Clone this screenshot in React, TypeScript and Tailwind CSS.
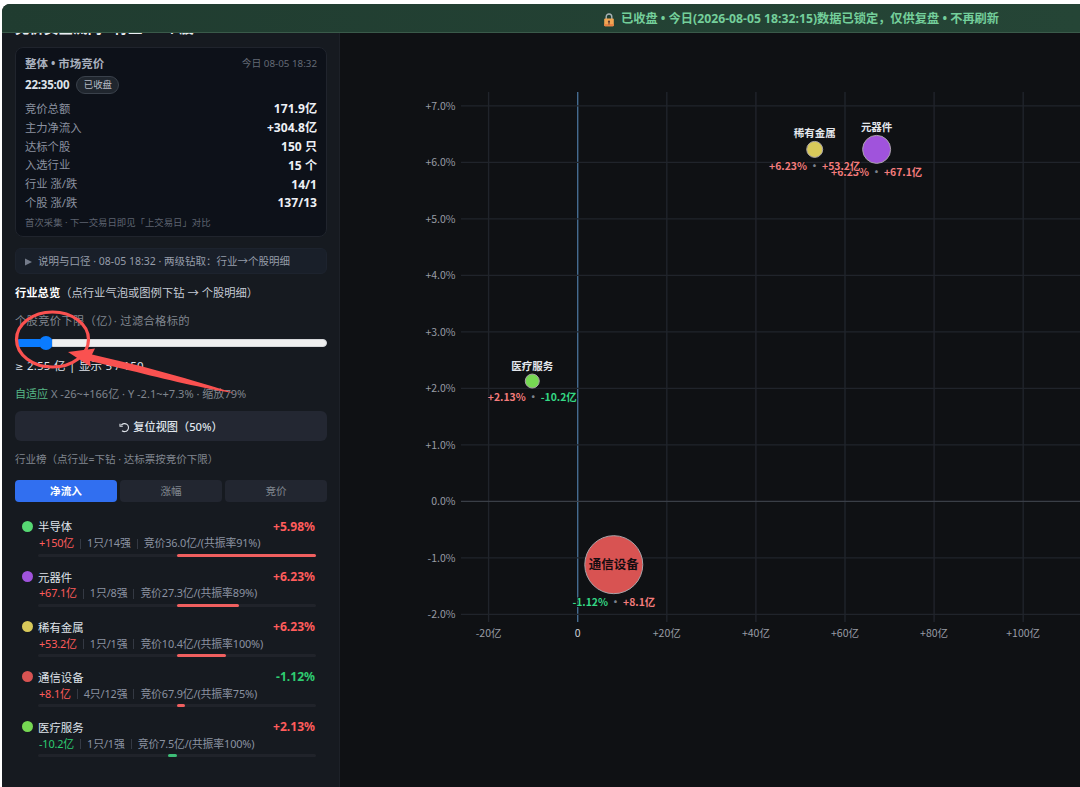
import { Fragment, useState } from "react";

type Industry = {
  name: string;
  color: string;
  pct: string;
  flow: string;
  count: string;
  auction: string;
  // signed share of half the bar
  share: number;
};

type Bubble = {
  name: string;
  color: string;
  x: number;
  y: number;
  r: number;
  pct: string;
  flow: string;
};

const STATS = [
  ["竞价总额", "171.9亿"],
  ["主力净流入", "+304.8亿"],
  ["达标个股", "150 只"],
  ["入选行业", "15 个"],
  ["行业 涨/跌", "14/1"],
  ["个股 涨/跌", "137/13"],
];

const TABS = ["净流入", "涨幅", "竞价"];

const INDUSTRIES: Industry[] = [
  { name: "半导体", color: "#56d873", pct: "+5.98%", flow: "+150亿", count: "1只/14强", auction: "竞价36.0亿/(共振率91%)", share: 1 },
  { name: "元器件", color: "#a053dc", pct: "+6.23%", flow: "+67.1亿", count: "1只/8强", auction: "竞价27.3亿/(共振率89%)", share: 0.447 },
  { name: "稀有金属", color: "#d8c95a", pct: "+6.23%", flow: "+53.2亿", count: "1只/1强", auction: "竞价10.4亿/(共振率100%)", share: 0.355 },
  { name: "通信设备", color: "#d85352", pct: "-1.12%", flow: "+8.1亿", count: "4只/12强", auction: "竞价67.9亿/(共振率75%)", share: 0.054 },
  { name: "医疗服务", color: "#76d853", pct: "+2.13%", flow: "-10.2亿", count: "1只/1强", auction: "竞价7.5亿/(共振率100%)", share: -0.068 },
];

const BUBBLES: Bubble[] = [
  { name: "元器件", color: "#a053dc", x: 67.1, y: 6.23, r: 14, pct: "+6.23%", flow: "+67.1亿" },
  { name: "稀有金属", color: "#d8c95a", x: 53.2, y: 6.23, r: 8, pct: "+6.23%", flow: "+53.2亿" },
  { name: "通信设备", color: "#d85352", x: 8.1, y: -1.12, r: 29, pct: "-1.12%", flow: "+8.1亿" },
  { name: "医疗服务", color: "#76d853", x: -10.2, y: 2.13, r: 7, pct: "+2.13%", flow: "-10.2亿" },
];

const X_TICKS = [-20, 0, 20, 40, 60, 80, 100];
const Y_TICKS = [7, 6, 5, 4, 3, 2, 1, 0, -1, -2];

// chart coordinates, origin at the top left of the chart pane
const px = (v: number) => 237.7 + v * 4.455;
const py = (v: number) => 468.4 - v * 56.5;

const tone = (s: string) => (s.startsWith("-") ? "text-[#2ecc71]" : "text-[#ff5c5c]");
const chartTone = (s: string) => (s.startsWith("-") ? "#34d884" : "#f47c7c");

function Banner() {
  return (
    <header className="flex h-[29px] shrink-0 items-center border-b border-[#3a5a4a] bg-linear-to-r from-[#203c30] to-[#254536] pt-[3px] pl-[601px] text-[12.23px] font-bold whitespace-nowrap text-[#74cf9b]">
      <svg width="12" height="14" viewBox="0 0 12 14" className="mr-[6px] shrink-0">
        <path d="M3.2 6V3.8a2.8 2.8 0 0 1 5.6 0V6" fill="none" stroke="#a9b2b5" strokeWidth="1.4" />
        <rect x="1.2" y="5.6" width="9.6" height="7.6" rx="1" fill="#f2a553" />
        <path d="M1.2 11h9.6v1.2a1 1 0 0 1-1 1H2.2a1 1 0 0 1-1-1z" fill="#e98545" />
        <circle cx="6" cy="8.6" r="1.1" fill="#5a3830" />
        <path d="M5.5 9h1v2.4h-1z" fill="#5a3830" />
      </svg>
      <span>已收盘 • 今日(2026-08-05 18:32:15)数据已锁定，仅供复盘 • 不再刷新</span>
    </header>
  );
}

function MarketCard() {
  return (
    <section className="mt-[9px] h-[190px] shrink-0 rounded-lg border border-[#20242d] bg-[#0d1119] px-[9px] pt-[7px]">
      <div className="flex h-[18px] items-center justify-between">
        <span className="text-[11.5px] font-bold text-[#a9b0be]">整体 • 市场竞价</span>
        <span className="text-[9.8px] text-[#646a76]">今日 08-05 18:32</span>
      </div>
      <div className="mt-px flex h-[22px] items-center gap-[7px]">
        <span className="text-[11.5px] font-bold tracking-[-0.2px] text-[#dfe3ea]">22:35:00</span>
        <span className="flex h-[18px] items-center rounded-full border border-[#3a414b] bg-[#20262e] px-[6.5px] text-[9.4px] text-[#b5bbc5]">
          已收盘
        </span>
      </div>
      <dl className="mt-[4px]">
        {STATS.map(([label, value]) => (
          <div key={label} className="flex h-[18.8px] items-center justify-between">
            <dt className="text-[11.3px] text-[#8b92a0]">{label}</dt>
            <dd className="text-[12.1px] font-bold text-[#eceff4]">{value}</dd>
          </div>
        ))}
      </dl>
      <p className="mt-[2px] text-[9.4px] leading-[16px] text-[#5d6370]">首次采集 · 下一交易日即见「上交易日」对比</p>
    </section>
  );
}

function IndustryRow({ item }: { item: Industry }) {
  const width = Math.abs(item.share) * 50;
  return (
    <li className="h-[50.1px] pr-[11px] pl-[7px]">
      <div className="flex h-[17px] items-center">
        <span className="mr-[5px] size-[11px] rounded-full" style={{ background: item.color }} />
        <span className="pt-px text-[11.4px] text-[#dfe3ea]">{item.name}</span>
        <span className={`mr-px ml-auto pt-px text-[12.1px] font-bold ${tone(item.pct)}`}>{item.pct}</span>
      </div>
      <div className="ml-[17px] flex h-[17px] items-center text-[10.9px] tracking-[-0.15px] whitespace-nowrap text-[#8b92a0]">
        {[item.flow, item.count, item.auction].map((part, i) => (
          <Fragment key={part}>
            {i > 0 && <span className="mx-[6px] h-[10px] w-px bg-[#343943]" />}
            <span className={i === 0 ? tone(item.flow) : ""}>{part}</span>
          </Fragment>
        ))}
      </div>
      <div className="relative mt-[2px] ml-[16px] h-[3px] rounded-full bg-[#20232a]">
        <div
          className={`absolute inset-y-0 rounded-full ${item.share < 0 ? "bg-[#3dbd77]" : "bg-[#f05f5f]"}`}
          style={{ left: `${item.share < 0 ? 50 - width : 50}%`, width: `${width}%` }}
        />
      </div>
    </li>
  );
}

function Sidebar() {
  const [tab, setTab] = useState(TABS[0]);

  return (
    <aside className="flex w-[338px] shrink-0 flex-col overflow-hidden border-r border-[#1d2128] bg-[#161a20] pr-[12px] pl-[13px] whitespace-nowrap">
      {/* scrolled partly under the banner */}
      <h1 className="-mt-[16px] mb-px h-[20px] shrink-0 text-[14.5px] leading-[20px] font-bold text-[#eceff4]">竞价资金流向 · 行业 → 个股</h1>
      <MarketCard />

      <div className="mt-[11px] flex h-[26px] shrink-0 items-center rounded-md border border-[#1d232e] bg-[#191f29] px-[9px] pt-px text-[10.5px] text-[#969daa]">
        <svg width="7" height="8" viewBox="0 0 7 8" className="mr-[6px]">
          <path d="M0 0.5 7 4 0 7.5z" fill="#747b8a" />
        </svg>
        说明与口径 · 08-05 18:32 · 两级钻取：行业→个股明细
      </div>

      <p className="mt-[10px] h-[18px] text-[11.3px] leading-[18px] text-[#c5cad4]">
        <b className="text-white">行业总览</b>（点行业气泡或图例下钻 → 个股明细）
      </p>
      <p className="mt-[10px] h-[18px] text-[11.3px] leading-[18px] tracking-[0.3px] text-[#80868f]">个股竞价下限（亿）· 过滤合格标的</p>

      <div className="mt-[6px] flex h-[14px] shrink-0 items-center">
        <div className="ml-px h-[8px] w-[24px] rounded-l-full bg-[#0a7bff]" />
        <div className="-mx-[1px] size-[14px] shrink-0 rounded-full bg-[#0a7bff]" />
        <div className="h-[8px] flex-1 rounded-r-full border border-[#d5d7da] bg-[#efefef]" />
      </div>

      <p className="mt-[7px] h-[18px] text-[11.5px] leading-[18px] tracking-[0.25px] text-[#dfe3ea]">
        <span className="font-['DejaVu_Sans',sans-serif] text-[10px]">≥</span> 2.55 亿 | 显示 5 / 150
      </p>
      <p className="mt-[10px] h-[18px] text-[11.05px] leading-[18px] text-[#80868f]">
        <span className="text-[#56b887]">自适应</span> X -26~+166亿 · Y -2.1~+7.3% · 缩放79%
      </p>

      <button className="mt-[8px] flex h-[30px] shrink-0 items-center justify-center gap-[3px] rounded-md bg-[#232732] pt-[2px] text-[11.2px] font-medium text-[#dfe3ea]">
        <svg width="11" height="11" viewBox="0 0 11 11" fill="none" stroke="currentColor" strokeWidth="1.1">
          <path d="M2.3 3.2A4 4 0 1 1 3 8.7M1 1.8v2.5h2.8" />
        </svg>
        复位视图（50%）
      </button>

      <p className="mt-[9px] h-[18px] text-[10.5px] leading-[18px] text-[#80868f]">行业榜（点行业=下钻 · 达标票按竞价下限）</p>

      <div className="mt-[12px] grid shrink-0 grid-cols-3 gap-[3px]">
        {TABS.map((t) => (
          <button
            key={t}
            onClick={() => setTab(t)}
            className={`h-[22px] rounded-[4px] pt-[2px] text-[10.6px] ${
              t === tab ? "bg-[#316ff0] font-bold text-white" : "bg-[#222630] text-[#80868f]"
            }`}
          >
            {t}
          </button>
        ))}
      </div>

      <ul className="mt-[16px]">
        {INDUSTRIES.map((item) => (
          <IndustryRow key={item.name} item={item} />
        ))}
      </ul>
    </aside>
  );
}

function BubbleChart() {
  return (
    <svg width="740" height="754" viewBox="0 0 740 754" className="block" fontSize="10.5" fill="#989ca5">
      {X_TICKS.map((v) => (
        <g key={v}>
          <line x1={px(v)} x2={px(v)} y1="59" y2="589" stroke={v === 0 ? "#456b90" : "#20242b"} strokeWidth="1.4" />
          <text x={px(v)} y="604" textAnchor="middle" fill={v === 0 ? "#d0d3d9" : undefined}>
            {v === 0 ? "0" : `${v > 0 ? "+" : ""}${v}亿`}
          </text>
        </g>
      ))}
      {Y_TICKS.map((v) => (
        <g key={v}>
          <line x1="121" x2="740" y1={py(v)} y2={py(v)} stroke={v === 0 ? "#3a3f47" : "#20242b"} strokeWidth="1.4" />
          <text x="115.5" y={py(v) + 4} textAnchor="end">
            {`${v > 0 ? "+" : ""}${v.toFixed(1)}%`}
          </text>
        </g>
      ))}
      {BUBBLES.map((b) => {
        const cx = px(b.x);
        const cy = py(b.y);
        const inside = b.r > 20;
        return (
          <g key={b.name}>
            <circle cx={cx} cy={cy} r={b.r} fill={b.color} stroke="#a9a3a8" strokeWidth="1" />
            <text
              x={cx}
              y={inside ? cy + 4.5 : cy - b.r - 4}
              textAnchor="middle"
              fontWeight="700"
              fontSize={inside ? 12.5 : 10.5}
              fill={inside ? "#140c10" : "#e4e7ec"}
            >
              {b.name}
            </text>
            <text x={cx} y={cy + b.r + 12.5} textAnchor="middle" fontWeight="700" fontSize="10.4" stroke="#0f1114" strokeWidth="2" paintOrder="stroke">
              <tspan fill={chartTone(b.pct)}>{b.pct}</tspan>
              <tspan fill="#7d828c" dx="2.3">·</tspan>
              <tspan fill={chartTone(b.flow)} dx="2.3">{b.flow}</tspan>
            </text>
          </g>
        );
      })}
    </svg>
  );
}

// hand-drawn ring and arrow pointing at the slider
function Annotation() {
  return (
    <svg width="260" height="110" className="pointer-events-none absolute top-[300px] left-0" fill="#fa5150">
      <ellipse cx="52.5" cy="39.5" rx="36" ry="27.5" fill="none" stroke="#fa5150" strokeWidth="3.2" />
      <path d="M68 52 95 48.5 92 54.5 130 63.5C165 72 205 84 234 93 205 89 165 79 130 70.5L90 61 91 67z" />
    </svg>
  );
}

export default function App() {
  return (
    <div className="relative h-[787px] w-[1080px] overflow-hidden bg-white pt-[4px] pl-[2px] font-['Noto_Sans','Noto_Sans_CJK_SC',sans-serif]">
      <div className="flex h-full flex-col overflow-hidden rounded-tl-lg bg-[#0f1114]">
        <Banner />
        <div className="flex min-h-0 flex-1">
          <Sidebar />
          <main className="min-w-0 flex-1 overflow-hidden font-['Noto_Sans_CJK_SC',sans-serif]">
            <BubbleChart />
          </main>
        </div>
      </div>
      <Annotation />
    </div>
  );
}
